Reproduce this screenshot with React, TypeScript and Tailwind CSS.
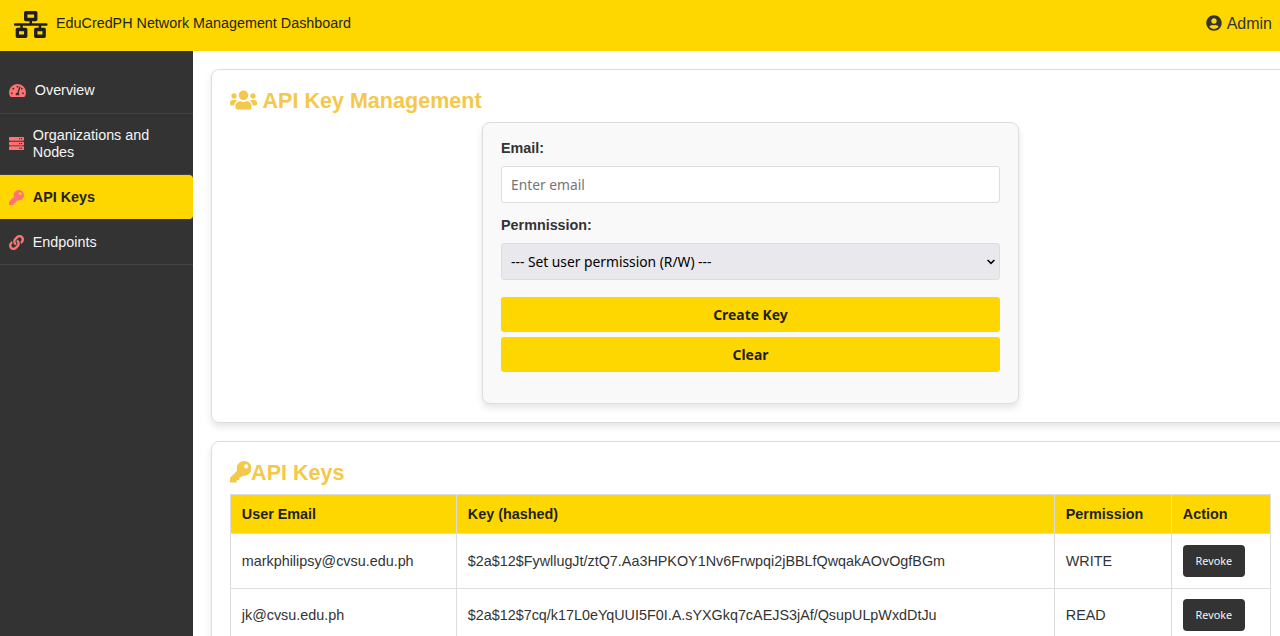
import React from "react";
import {
  FaTachometerAlt,
  FaKey,
  FaLink,
  FaNetworkWired,
  FaServer,
  FaUserCircle,
  FaUsers,
} from "react-icons/fa";

type NavItem = { label: string; icon: React.ReactNode; className: string };

const navItems: NavItem[] = [
  { label: "Overview", icon: <FaTachometerAlt className="h-[15px] w-[17px]" />, className: "h-[46px] gap-[8.5px]" },
  { label: "Organizations and Nodes", icon: <FaServer className="size-[15px]" />, className: "h-[61px] gap-[8.5px] pb-px" },
  { label: "API Keys", icon: <FaKey className="size-[15px]" />, className: "h-[44px] gap-[8.5px] pt-px" },
  { label: "Endpoints", icon: <FaLink className="size-[15px]" />, className: "h-[46px] gap-[8.5px] pt-px" },
];

const rows = [
  {
    email: "markphilipsy@cvsu.edu.ph",
    hash: "$2a$12$FywllugJt/ztQ7.Aa3HPKOY1Nv6Frwpqi2jBBLfQwqakAOvOgfBGm",
    permission: "WRITE",
  },
  {
    email: "jk@cvsu.edu.ph",
    hash: "$2a$12$7cq/k17L0eYqUUI5F0I.A.sYXGkq7cAEJS3jAf/QsupULpWxdDtJu",
    permission: "READ",
  },
];

function Header() {
  return (
    <header className="flex h-[51px] shrink-0 items-center bg-[#ffd700] pl-[14px] pr-2 pb-[4px] text-[#1f1f1f]">
      <FaNetworkWired className="mt-px h-[27px] w-[33.5px]" />
      <span className="ml-[8.5px] text-[14.35px]">EduCredPH Network Management Dashboard</span>
      <span className="ml-auto flex items-center gap-[5px] text-base text-[#333]">
        <FaUserCircle className="-mt-px size-4" />
        Admin
      </span>
    </header>
  );
}

function Sidebar() {
  return (
    <nav className="w-[193px] shrink-0 bg-[#333] pt-[17px] text-[14.35px] leading-[17px] text-[#f5f5f5]">
      {navItems.map((item) => {
        const active = item.label === "API Keys";
        return (
          <a
            key={item.label}
            className={`flex items-center border-b pl-[9.3px] pr-8 ${item.className} ${
              active
                ? "rounded-r-[4px] border-[#ffd700] bg-[#ffd700] font-bold text-[#1f1f1f]"
                : "border-[#444]"
            }`}
          >
            <span className="shrink-0 text-[#ff7373]">{item.icon}</span>
            <span>{item.label}</span>
          </a>
        );
      })}
    </nav>
  );
}

function KeyForm() {
  return (
    <form className="mx-auto h-[282px] w-[537px] rounded-[8px] border border-[#ddd] bg-[#f9f9f9] px-[18px] pt-[17px] shadow-[0_4px_7px_rgba(0,0,0,0.1)]">
      <label className="block h-[26px] text-[14.35px] leading-4 font-bold text-[#333]">Email:</label>
      <input
        placeholder="Enter email"
        className="block h-[37px] w-full rounded-[3px] border border-[#ddd] bg-white px-[9px] font-['Noto_Sans',sans-serif] text-[13.8px] placeholder:text-[#757575]"
      />
      <label className="mt-[14px] block h-[26px] text-[14.35px] leading-4 font-bold text-[#333]">Permnission:</label>
      <div className="flex h-[37px] items-center justify-between rounded-[3px] border border-[#ddd] bg-[#e9e9ed] pr-[4px] pl-[9px] font-['Noto_Sans',sans-serif] text-[13.8px] text-black">
        <span className="pt-px">--- Set user permission (R/W) ---</span>
        <svg viewBox="0 0 8 6" className="h-[6px] w-2" fill="none" stroke="currentColor" strokeWidth="1.5">
          <path d="M.6 1 4 4.4 7.4 1" />
        </svg>
      </div>
      <button type="button" className="mt-[17px] block h-[35px] w-full rounded-[3px] bg-[#ffd700] pt-[2px] font-['Noto_Sans',sans-serif] text-[13.9px] font-bold text-[#1f1f1f]">
        Create Key
      </button>
      <button type="button" className="mt-[5px] block h-[35px] w-full rounded-[3px] bg-[#ffd700] pt-[2px] font-['Noto_Sans',sans-serif] text-[13.9px] font-bold text-[#1f1f1f]">
        Clear
      </button>
    </form>
  );
}

function KeyTable() {
  return (
    <table className="w-[1041px] table-fixed border-collapse text-left text-[14.36px] text-[#333]">
      <colgroup>
        <col className="w-[226px]" />
        <col className="w-[598px]" />
        <col className="w-[117px]" />
        <col className="w-[99px]" />
      </colgroup>
      <thead>
        <tr className="h-[39px] bg-[#ffd700] text-[#1f1f1f]">
          {["User Email", "Key (hashed)", "Permission", "Action"].map((h) => (
            <th key={h} className="border border-[#ddd] px-[10.8px] leading-4">{h}</th>
          ))}
        </tr>
      </thead>
      <tbody>
        {rows.map((r) => (
          <tr key={r.email} className="h-[54.5px]">
            <td className="border border-[#ddd] px-[10.8px] pt-[2px]">{r.email}</td>
            <td className="border border-[#ddd] px-[10.8px] pt-[2px]">{r.hash}</td>
            <td className="border border-[#ddd] px-[10.8px] pt-[2px]">{r.permission}</td>
            <td className="border border-[#ddd] px-[10.8px]">
              <button className="block h-8 w-[62px] rounded-[4px] bg-[#333] font-['Noto_Sans',sans-serif] text-[10.8px] text-[#f5f5f5]">
                Revoke
              </button>
            </td>
          </tr>
        ))}
      </tbody>
    </table>
  );
}

export default function App() {
  return (
    <div className="flex h-[636px] w-[1280px] flex-col overflow-hidden bg-white font-['Liberation_Sans',Arial,sans-serif]">
      <Header />
      <div className="flex min-h-0 flex-1">
        <Sidebar />
        <main className="min-w-0 flex-1 overflow-hidden pt-[18px] pl-[18px]">
          <section className="h-[354px] w-[1079px] rounded-[8px] border border-[#ddd] bg-white px-[18px] pt-[17px] shadow-[0_4px_7px_rgba(0,0,0,0.1)]">
            <h2 className="flex h-[35px] items-start gap-[5.5px] text-[21.55px] leading-[27px] font-bold text-[#f4c84a]">
              <FaUsers className="mt-[2px] h-[22px] w-[27px]" />
              API Key Management
            </h2>
            <KeyForm />
          </section>
          <section className="mt-[18px] h-[354px] w-[1079px] rounded-[8px] border border-[#ddd] bg-white px-[18px] pt-[17px] shadow-[0_4px_7px_rgba(0,0,0,0.1)]">
            <h2 className="flex h-[35px] items-start text-[21.55px] leading-[27px] font-bold text-[#f4c84a]">
              <FaKey className="mt-[2px] -ml-[0.5px] size-[21.6px]" />
              API Keys
            </h2>
            <KeyTable />
          </section>
        </main>
      </div>
    </div>
  );
}
